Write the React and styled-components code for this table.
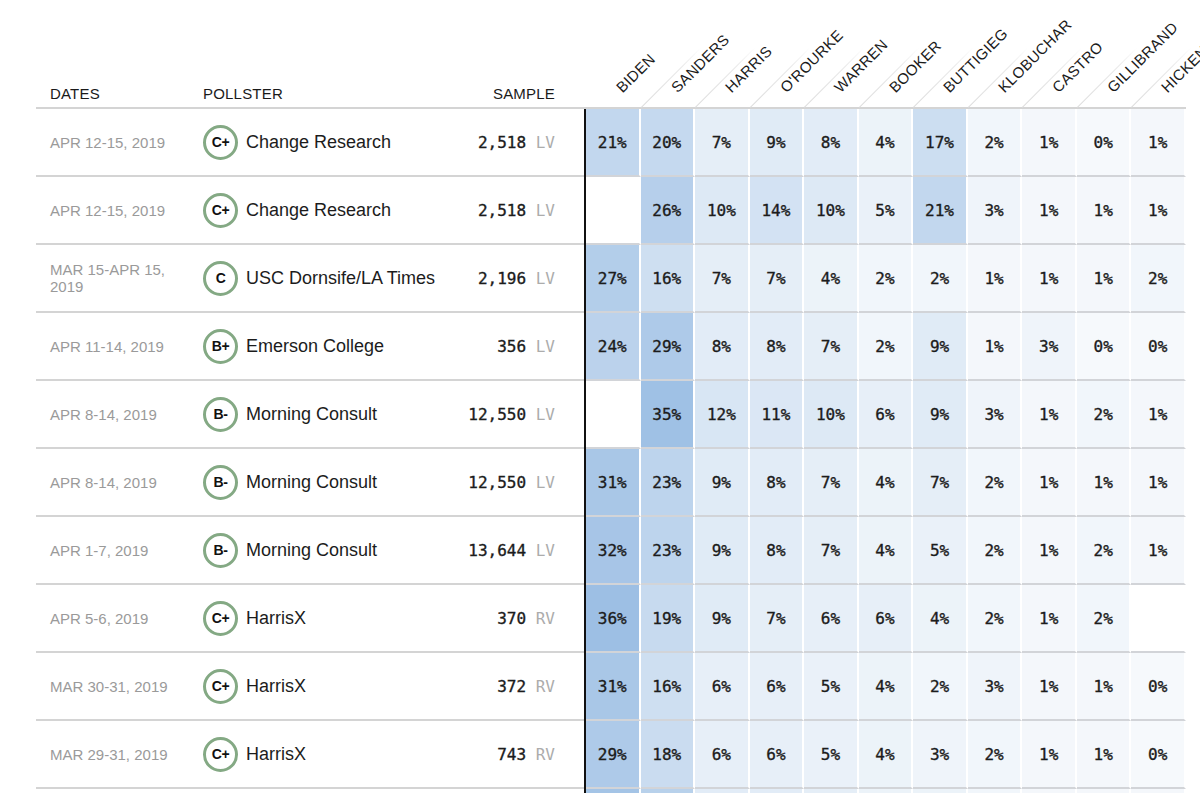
import React from "react";
import styled, {createGlobalStyle} from "styled-components";

const CANDIDATES = [
  "BIDEN", "SANDERS", "HARRIS", "O'ROURKE", "WARREN", "BOOKER",
  "BUTTIGIEG", "KLOBUCHAR", "CASTRO", "GILLIBRAND", "HICKENLOOPER",
];

const POLLS = [
  {dates: "APR 12-15, 2019", grade: "C+", pollster: "Change Research", sample: "2,518", pop: "LV",
    results: [21, 20, 7, 9, 8, 4, 17, 2, 1, 0, 1]},
  {dates: "APR 12-15, 2019", grade: "C+", pollster: "Change Research", sample: "2,518", pop: "LV",
    results: [null, 26, 10, 14, 10, 5, 21, 3, 1, 1, 1]},
  {dates: "MAR 15-APR 15, 2019", grade: "C", pollster: "USC Dornsife/LA Times", sample: "2,196", pop: "LV",
    results: [27, 16, 7, 7, 4, 2, 2, 1, 1, 1, 2]},
  {dates: "APR 11-14, 2019", grade: "B+", pollster: "Emerson College", sample: "356", pop: "LV",
    results: [24, 29, 8, 8, 7, 2, 9, 1, 3, 0, 0]},
  {dates: "APR 8-14, 2019", grade: "B-", pollster: "Morning Consult", sample: "12,550", pop: "LV",
    results: [null, 35, 12, 11, 10, 6, 9, 3, 1, 2, 1]},
  {dates: "APR 8-14, 2019", grade: "B-", pollster: "Morning Consult", sample: "12,550", pop: "LV",
    results: [31, 23, 9, 8, 7, 4, 7, 2, 1, 1, 1]},
  {dates: "APR 1-7, 2019", grade: "B-", pollster: "Morning Consult", sample: "13,644", pop: "LV",
    results: [32, 23, 9, 8, 7, 4, 5, 2, 1, 2, 1]},
  {dates: "APR 5-6, 2019", grade: "C+", pollster: "HarrisX", sample: "370", pop: "RV",
    results: [36, 19, 9, 7, 6, 6, 4, 2, 1, 2, null]},
  {dates: "MAR 30-31, 2019", grade: "C+", pollster: "HarrisX", sample: "372", pop: "RV",
    results: [31, 16, 6, 6, 5, 4, 2, 3, 1, 1, 0]},
  {dates: "MAR 29-31, 2019", grade: "C+", pollster: "HarrisX", sample: "743", pop: "RV",
    results: [29, 18, 6, 6, 5, 4, 3, 2, 1, 1, 0]},
];

// only the top edge of the next row shows in the window
const NEXT_ROW = [33, 25, 8, 8, 7, 4, 4, 2, 1, 1, 1];

// light -> dark blue, linear on the share
const shade = (v) => {
  if (v === null) return "#ffffff";
  const t = Math.min(v / 36, 1.1);
  const mix = (a, b) => Math.round(a + (b - a) * t);
  return `rgb(${mix(246, 157)}, ${mix(249, 191)}, ${mix(252, 228)})`;
};

const GlobalStyle = createGlobalStyle`
  html, body {
    margin: 0;
    padding: 0;
    background: #fff;
    overflow: hidden;
  }
  body {
    font-family: "Liberation Sans", Arial, sans-serif;
    color: #222;
  }
`;

const Page = styled.div`
  width: 1200px;
  height: 793px;
  overflow: hidden;
  padding-left: 36px;
  box-sizing: border-box;
`;

const Table = styled.div`
  width: 1150px;
`;

const gridCols = "167px 1fr 2px 600px";

const HeaderRow = styled.div`
  display: grid;
  grid-template-columns: ${gridCols};
  height: 107px;
  border-bottom: 2px solid #d4d4d4;
`;

const HeadText = styled.div`
  align-self: end;
  padding: 0 ${(p) => (p.$right ? "29px" : "0")} 4px ${(p) => (p.$pad ? "14px" : "0")};
  text-align: ${(p) => (p.$right ? "right" : "left")};
  font-size: 15px;
  line-height: 18px;
  letter-spacing: 0.2px;
  color: #1a1a1a;
`;

const PollsterHead = styled.div`
  display: flex;
  align-items: flex-end;
  justify-content: space-between;
`;

const CandHeads = styled.div`
  grid-column: 4;
  display: grid;
  grid-template-columns: repeat(11, 1fr);
`;

const CandHead = styled.div`
  position: relative;
  height: 107px;

  &::after {
    content: "";
    display: ${(p) => (p.$first ? "none" : "block")};
    position: absolute;
    left: 0;
    bottom: 0;
    width: 1px;
    height: 84px;
    background: linear-gradient(to top, #dcdcdc, #e9e9e9 70%, rgba(236, 236, 236, 0));
    transform-origin: 0 100%;
    transform: rotate(45deg);
  }
`;

const CandLabel = styled.span`
  position: absolute;
  left: 38px;
  bottom: 12px;
  white-space: nowrap;
  font-size: 15px;
  line-height: 15px;
  letter-spacing: 0.3px;
  color: #1a1a1a;
  transform-origin: 0 100%;
  transform: rotate(-45deg);
`;

const Row = styled.div`
  display: grid;
  grid-template-columns: ${gridCols};
  height: 68px;
`;

const InfoCell = styled.div`
  display: flex;
  align-items: center;
  border-bottom: 2px solid #d4d4d4;
`;

const DateCell = styled(InfoCell)`
  padding-left: 14px;
  font-size: 15px;
  line-height: 17px;
  color: #9a9a9a;
`;

const DateText = styled.span`
  max-width: 128px;
`;

const PollsterCell = styled(InfoCell)`
  justify-content: space-between;
  padding-right: 29px;
`;

const Pollster = styled.div`
  display: flex;
  align-items: center;
  gap: 8px;
  font-size: 18px;
  color: #1c1c1c;
`;

const Grade = styled.span`
  display: flex;
  align-items: center;
  justify-content: center;
  width: 35px;
  height: 35px;
  box-sizing: border-box;
  border: 3px solid #84a984;
  border-radius: 50%;
  font-size: 14px;
  font-weight: bold;
  color: #111;
  letter-spacing: -0.5px;
`;

const Sample = styled.span`
  font-family: "DejaVu Sans Mono", "Liberation Mono", monospace;
  font-size: 16px;
  color: #1c1c1c;
  white-space: pre;
  -webkit-text-stroke: 0.35px currentColor;
`;

const Pop = styled.span`
  color: #acacac;
  -webkit-text-stroke: 0;
`;

const Divider = styled.div`
  background: #111;
`;

const Cells = styled.div`
  display: grid;
  grid-template-columns: repeat(11, 1fr);
`;

const Cell = styled.div`
  display: flex;
  align-items: center;
  justify-content: center;
  background: ${(p) => p.$bg};
  border-right: 2px solid #fff;
  border-bottom: 2px solid #d2d4d8;
  font-family: "DejaVu Sans Mono", "Liberation Mono", monospace;
  font-size: 16px;
  color: #1c1c1c;
  -webkit-text-stroke: 0.35px currentColor;
`;

export default function App() {
  return (
    <Page>
      <GlobalStyle/>
      <Table>
        <HeaderRow>
          <HeadText $pad>DATES</HeadText>
          <PollsterHead>
            <HeadText>POLLSTER</HeadText>
            <HeadText $right>SAMPLE</HeadText>
          </PollsterHead>
          <CandHeads>
            {CANDIDATES.map((name, i) => (
              <CandHead key={name} $first={i === 0}>
                <CandLabel>{name}</CandLabel>
              </CandHead>
            ))}
          </CandHeads>
        </HeaderRow>

        {POLLS.map((poll, idx) => (
          <Row key={idx}>
            <DateCell><DateText>{poll.dates}</DateText></DateCell>
            <PollsterCell>
              <Pollster>
                <Grade>{poll.grade}</Grade>
                {poll.pollster}
              </Pollster>
              <Sample>{poll.sample} <Pop>{poll.pop}</Pop></Sample>
            </PollsterCell>
            <Divider/>
            <Cells>
              {poll.results.map((v, i) => (
                <Cell key={i} $bg={shade(v)}>{v === null ? "" : `${v}%`}</Cell>
              ))}
            </Cells>
          </Row>
        ))}

        <Row>
          <InfoCell/>
          <InfoCell/>
          <Divider/>
          <Cells>
            {NEXT_ROW.map((v, i) => <Cell key={i} $bg={shade(v)}/>)}
          </Cells>
        </Row>
      </Table>
    </Page>
  );
}
